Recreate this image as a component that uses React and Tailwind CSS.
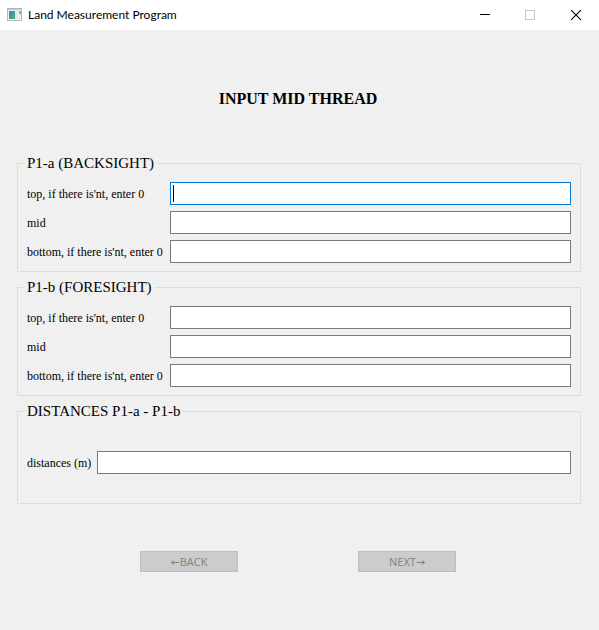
import { useId } from "react";

function AppIcon() {
  return (
    <svg width="16" height="14" viewBox="0 0 16 14" aria-hidden="true" shapeRendering="crispEdges">
      <defs>
        <linearGradient id="pane" x1="0" y1="0" x2="1" y2="1">
          <stop offset="0" stopColor="#4a7fb0" />
          <stop offset="1" stopColor="#4fae7c" />
        </linearGradient>
      </defs>
      <rect x="0.5" y="0.5" width="14" height="12" fill="#f2f3f4" stroke="#b4b7bb" />
      <rect x="1" y="1" width="13" height="1" fill="#c4c8cd" />
      <rect x="2" y="3" width="6" height="8" fill="url(#pane)" />
      <rect x="8" y="3" width="3" height="8" fill="#e2e4e6" />
      <rect x="12" y="3" width="2" height="3" fill="#7fb8a0" />
      <rect x="12" y="6" width="2" height="5" fill="#e8e8e8" />
    </svg>
  );
}

function TitleBar() {
  return (
    <header className="flex h-[30px] items-center bg-white pl-[7px]">
      <AppIcon />
      <span className="ml-[5px] flex-1 font-['Lato','Open_Sans',sans-serif] text-[12px] leading-[16px] text-black">
        Land Measurement Program
      </span>
      <button type="button" aria-label="Minimize" className="flex h-[28px] w-[45px] items-center justify-center">
        <svg width="10" height="10" shapeRendering="crispEdges">
          <rect y="4" width="10" height="1" fill="#000" />
        </svg>
      </button>
      <button type="button" aria-label="Maximize" disabled className="flex h-[28px] w-[46px] items-center justify-center">
        <svg width="10" height="10" shapeRendering="crispEdges">
          <rect x="0.5" y="0.5" width="9" height="9" fill="none" stroke="#c8c8c8" />
        </svg>
      </button>
      <button type="button" aria-label="Close" className="flex h-[28px] w-[46px] items-center justify-center">
        <svg width="10" height="10">
          <path d="M0 0L10 10M10 0L0 10" stroke="#000" strokeWidth="1.1" />
        </svg>
      </button>
    </header>
  );
}

function Field({ label, active = false }) {
  const id = useId();
  return (
    <>
      <label htmlFor={id} className="text-[12px] leading-[16px] whitespace-nowrap">
        {label}
      </label>
      <div className="relative flex">
        <input
          id={id}
          type="text"
          autoFocus={active}
          className="h-[23px] w-full min-w-0 border border-[#7a7a7a] bg-white px-[3px] text-[12px] caret-transparent outline-none focus:border-[#0078d7]"
        />
        {active && <span className="absolute top-[3px] left-[3px] h-[17px] w-px bg-black" />}
      </div>
    </>
  );
}

function Group({ title, children, single = false }) {
  return (
    <fieldset className="min-w-0 border border-[#dcdcdc] px-[9px]">
      <legend className="-ml-0.5 px-0.5 text-[15px] leading-[21px]">{title}</legend>
      <div
        className={
          "grid items-center gap-[6px] " +
          (single ? "grid-cols-[auto_1fr] py-[29px]" : "grid-cols-[minmax(137px,auto)_1fr] py-2")
        }
      >
        {children}
      </div>
    </fieldset>
  );
}

function NavButton({ children }) {
  return (
    <button
      type="button"
      disabled
      className="h-[21px] w-[98px] border border-[#bfbfbf] bg-[#cccccc] font-['Open_Sans','DejaVu_Sans',sans-serif] text-[11px] leading-[19px] text-[#808080]"
    >
      {children}
    </button>
  );
}

export default function App() {
  return (
    <div className="flex min-h-screen flex-col bg-[#f0f0f0] font-['Liberation_Serif','Times_New_Roman',serif] text-black">
      <TitleBar />
      <main className="px-[17px] pt-[59px] pb-[58px]">
        <h1 className="pr-[3px] text-center text-[16px] leading-[20px] font-bold">INPUT MID THREAD</h1>
        <form className="mt-[44px] mr-px flex flex-col gap-[5px]">
          <Group title="P1-a (BACKSIGHT)">
            <Field label="top, if there is'nt, enter 0" active />
            <Field label="mid" />
            <Field label="bottom, if there is'nt, enter 0" />
          </Group>
          <Group title="P1-b (FORESIGHT)">
            <Field label="top, if there is'nt, enter 0" />
            <Field label="mid" />
            <Field label="bottom, if there is'nt, enter 0" />
          </Group>
          <Group title="DISTANCES P1-a - P1-b" single>
            <Field label="distances (m)" />
          </Group>
        </form>
        <nav className="mt-[47px] flex justify-center gap-[120px] pr-[3px]">
          <NavButton>←BACK</NavButton>
          <NavButton>NEXT→</NavButton>
        </nav>
      </main>
    </div>
  );
}
